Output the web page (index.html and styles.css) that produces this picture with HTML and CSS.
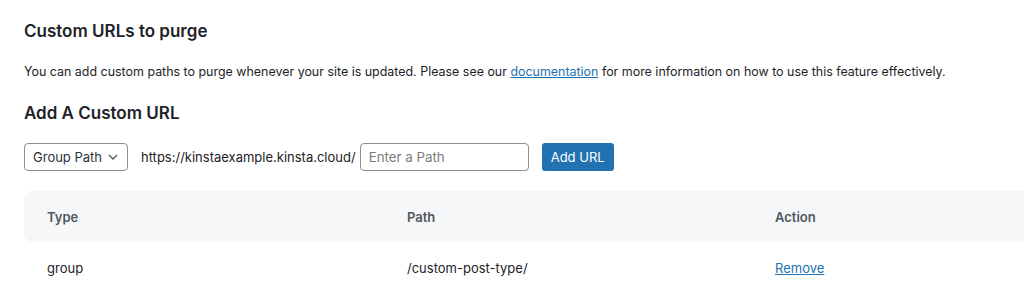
FILE: index.html
```html
<!DOCTYPE html>
<html>
<head>
<meta charset="utf-8">
<link rel="stylesheet" href="styles.css">
</head>
<body>
<div class="page">
  <h2 class="title">Custom URLs to purge</h2>
  <p class="desc">You can add custom paths to purge whenever your site is updated. Please see our <a href="#">documentation</a> for more information on how to use this feature effectively.</p>
  <h2 class="subtitle">Add A Custom URL</h2>
  <div class="form-row">
    <div class="select">Group Path
      <svg class="chev" width="10" height="6" viewBox="0 0 10 6"><path d="M1 1l4 4 4-4" fill="none" stroke="#50575e" stroke-width="1.3"/></svg>
    </div>
    <span class="base">https://kinstaexample.kinsta.cloud/</span>
    <div class="input">Enter a Path</div>
    <button class="btn">Add URL</button>
  </div>
  <div class="table">
    <div class="thead">
      <div class="c1">Type</div>
      <div class="c2">Path</div>
      <div class="c3">Action</div>
    </div>
    <div class="trow">
      <div class="c1">group</div>
      <div class="c2">/custom-post-type/</div>
      <div class="c3"><a href="#">Remove</a></div>
    </div>
  </div>
</div>
</body>
</html>
```
FILE: styles.css
```css
* { box-sizing: border-box; }
html, body { margin: 0; padding: 0; background: #fff; }
body { font-family: "Inter", "Liberation Sans", sans-serif; color: #1d2327; font-size: 13px; overflow: hidden; }
.page { padding: 20px 0 0 24px; }
.title { margin: 0; font-size: 17px; font-weight: 600; line-height: 22px; }
.desc { margin: 20px 0 0; line-height: 20px; font-size: 12.45px; }
.desc a { color: #2271b1; }
.subtitle { margin: 20px 0 0; font-size: 17px; font-weight: 600; line-height: 22px; }
.form-row { display: flex; align-items: center; margin-top: 19px; height: 28px; }
.select { width: 104px; height: 28px; border: 1px solid #8c8f94; border-radius: 4px; display: flex; align-items: center; padding-left: 8px; gap: 6px; font-size: 13px; color: #2c3338; }
.base { margin-left: 13px; }
.input { width: 169px; height: 28px; border: 1px solid #8c8f94; border-radius: 4px; margin-left: 4px; display: flex; align-items: center; padding-left: 8px; color: #787c82; font-size: 13.3px; }
.btn { margin-left: 13px; height: 28px; width: 72px; background: #2271b1; color: #fff; border: none; border-radius: 3px; font: inherit; font-size: 13px; }
.table { margin-top: 20px; }
.thead { display: flex; background: #f6f7f8; border-radius: 8px 0 0 8px; height: 51px; align-items: center; font-weight: 600; color: #50575e; }
.trow { display: flex; height: 52px; align-items: center; }
.c1 { width: 360px; padding-left: 23px; }
.c2 { width: 368px; padding-left: 23px; }
.c3 { padding-left: 23px; }
.trow a { color: #2271b1; }
```
